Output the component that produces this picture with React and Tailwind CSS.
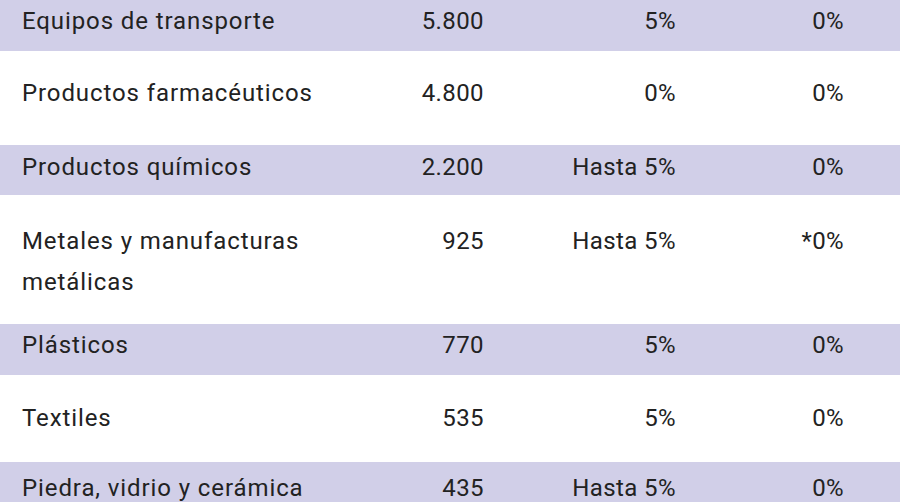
import React from "react";

const rows = [
  { label: "Equipos de transporte", v: "5.800", a: "5%", b: "0%", bg: "bg-[#d1cfe8]", h: "h-[51px]", pt: "pt-[1px]" },
  { label: "Productos farmacéuticos", v: "4.800", a: "0%", b: "0%", bg: "bg-white", h: "h-[94px]", pt: "pt-[22px]" },
  { label: "Productos químicos", v: "2.200", a: "Hasta 5%", b: "0%", bg: "bg-[#d1cfe8]", h: "h-[50px]", pt: "pt-[2px]" },
  { label: "Metales y manufacturas metálicas", v: "925", a: "Hasta 5%", b: "*0%", bg: "bg-white", h: "h-[129px]", pt: "pt-[26px]" },
  { label: "Plásticos", v: "770", a: "5%", b: "0%", bg: "bg-[#d1cfe8]", h: "h-[51px]", pt: "pt-[1px]" },
  { label: "Textiles", v: "535", a: "5%", b: "0%", bg: "bg-white", h: "h-[87px]", pt: "pt-[23px]" },
  { label: "Piedra, vidrio y cerámica", v: "435", a: "Hasta 5%", b: "0%", bg: "bg-[#d1cfe8]", h: "h-[60px]", pt: "pt-[6px]" },
];

export default function App() {
  return (
    <div
      className="w-[900px] h-[502px] overflow-hidden bg-white text-[#222222] text-[24px] leading-[41px]"
      style={{ fontFamily: "Roboto, 'Liberation Sans', sans-serif" }}
    >
      {rows.map((r, i) => (
        <div
          key={i}
          className={`grid grid-cols-[330px_132px_192px_168px] pl-[22px] ${r.bg} ${r.h} ${r.pt}`}
        >
          <div className="tracking-[0.9px]">{r.label}</div>
          <div className="text-right tracking-[0.4px]">{r.v}</div>
          <div className="text-right tracking-[0.4px]">{r.a}</div>
          <div className="text-right tracking-[0.4px]">{r.b}</div>
        </div>
      ))}
    </div>
  );
}
